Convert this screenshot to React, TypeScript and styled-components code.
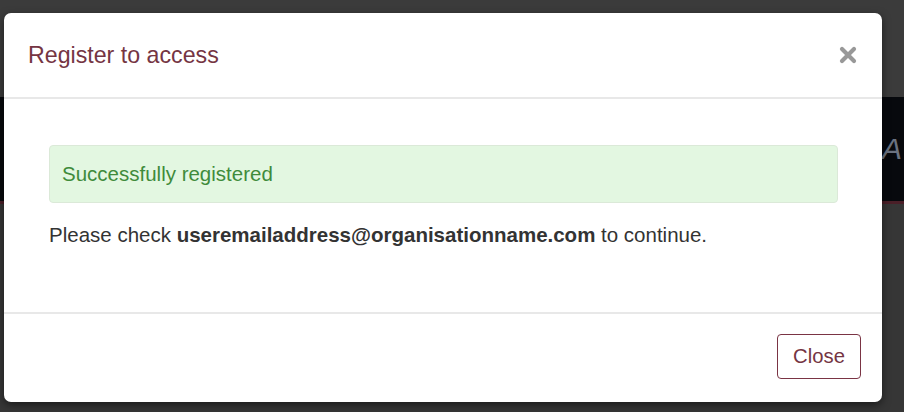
import React from "react";
import styled, { createGlobalStyle } from "styled-components";

const Global = createGlobalStyle`
  html, body { margin: 0; padding: 0; }
  body { font-family: "Liberation Sans", Arial, sans-serif; background: #3a3a3a; overflow: hidden; }
`;

const Page = styled.div`
  position: relative;
  width: 904px;
  height: 412px;
  display: flex;
  flex-direction: column;
  background: #3a3a3a;
  overflow: hidden;
`;

const TopBand = styled.div`
  height: 97px;
  background: #3b3b3b;
`;

const NavBand = styled.div`
  height: 104px;
  background: #07090d;
  border-bottom: 3px solid #4a1f28;
  display: flex;
  justify-content: flex-end;
  align-items: center;
  color: #6a7280;
  font-style: italic;
  font-size: 30px;
  padding-right: 2px;
`;

const NavText = styled.span`
  word-spacing: 4px;
`;

const RestBand = styled.div`
  flex: 1;
  background: #363636;
`;

const Overlay = styled.div`
  position: absolute;
  inset: 0;
  padding: 13px 22px 10px 4px;
  display: flex;
`;

const Modal = styled.div`
  flex: 1;
  background: #fff;
  border-radius: 7px;
  display: flex;
  flex-direction: column;
  box-shadow: 0 3px 9px rgba(0, 0, 0, 0.5);
  overflow: hidden;
`;

const Header = styled.div`
  border-bottom: 2px solid #e8e8e8;
  display: flex;
  align-items: center;
  justify-content: space-between;
  padding: 0 24px 0 24px;
  box-sizing: border-box;
  height: 86px;
`;

const Title = styled.h4`
  margin: 0;
  font-weight: 400;
  font-size: 23.2px;
  color: #753543;
  padding-top: 0;
`;

const CloseX = styled.button`
  border: 0;
  background: transparent;
  padding: 0;
  width: 20px;
  height: 20px;
  display: flex;
  align-items: center;
  justify-content: center;
  cursor: pointer;
  opacity: 0.4;
`;

const Body = styled.div`
  flex: 1;
  padding: 46px 44px 0 45px;
  border-bottom: 2px solid #e8e8e8;
`;

const Alert = styled.div`
  height: 58px;
  box-sizing: border-box;
  background: #e3f7e1;
  border: 1.5px solid #dbe9d8;
  border-radius: 4px;
  padding: 0 12px;
  display: flex;
  align-items: center;
  color: #3f8b3b;
  font-size: 20.5px;
`;

const Text = styled.p`
  margin: 20px 0 0 0;
  font-size: 20.5px;
  color: #333;
  b { font-weight: 700; }
`;

const Footer = styled.div`
  height: 88px;
  box-sizing: border-box;
  display: flex;
  justify-content: flex-end;
  align-items: center;
  padding: 0 21px 3px 0;
`;

const Button = styled.button`
  font-family: "Liberation Sans", Arial, sans-serif;
  font-size: 20.3px;
  color: #753543;
  background: #fff;
  border: 1.5px solid #7a3444;
  border-radius: 4px;
  width: 84px;
  height: 45px;
  padding: 0;
`;

export default function App() {
  return (
    <>
      <Global />
      <Page>
        <TopBand />
        <NavBand>
          <NavText>T A</NavText>
        </NavBand>
        <RestBand />
        <Overlay>
          <Modal>
            <Header>
              <Title>Register to access</Title>
              <CloseX aria-label="Close">
                <svg width="18" height="18" viewBox="0 0 18 18">
                  <path d="M3 3 L15 15 M15 3 L3 15" stroke="#000" strokeWidth="4.2" strokeLinecap="round" />
                </svg>
              </CloseX>
            </Header>
            <Body>
              <Alert>Successfully registered</Alert>
              <Text>
                Please check <b>useremailaddress@organisationname.com</b> to continue.
              </Text>
            </Body>
            <Footer>
              <Button>Close</Button>
            </Footer>
          </Modal>
        </Overlay>
      </Page>
    </>
  );
}
